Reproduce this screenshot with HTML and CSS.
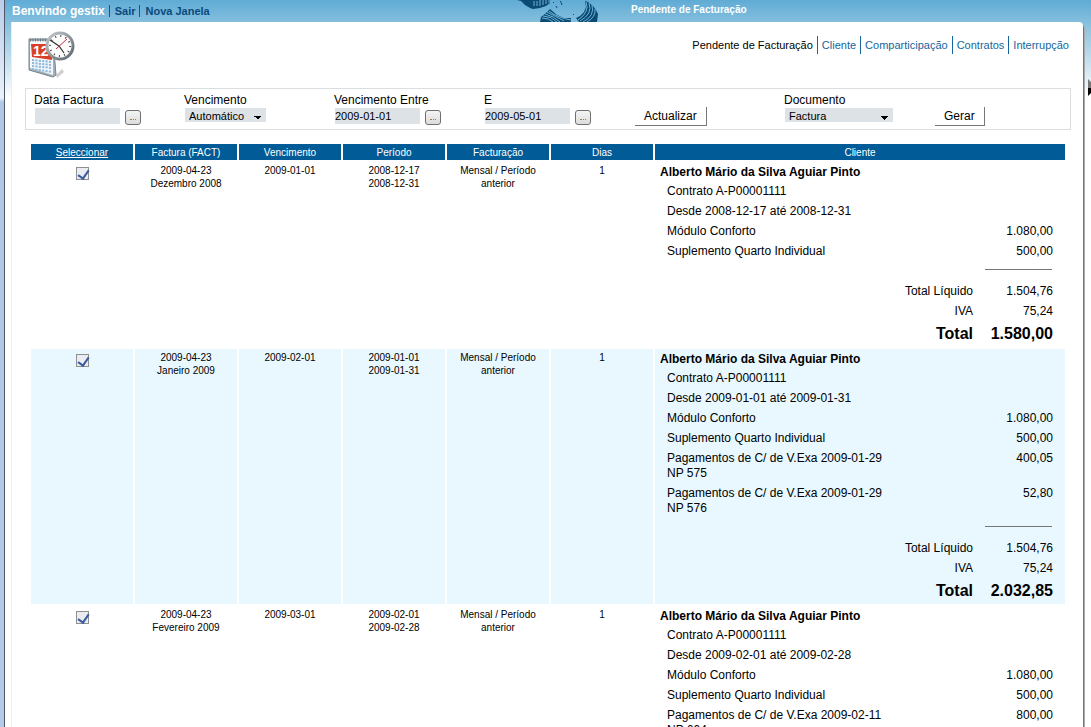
FILE: index.html
```html
<!DOCTYPE html>
<html lang="pt">
<head>
<meta charset="utf-8">
<title>Pendente de Facturação</title>
<link rel="stylesheet" href="styles.css">
</head>
<body>
<div class="shell">
  <div class="frame"></div>
  <div class="page">
    <header class="topbar">
      <nav class="session">
        <strong class="welcome">Benvindo gestix</strong>
        <a href="#">Sair</a>
        <a href="#">Nova Janela</a>
      </nav>
      <svg class="brand" viewBox="0 0 84 22" aria-hidden="true">
        <g fill="none" stroke="#0b4a73">
          <path d="M1 0L5 1L9 5L14 8L17 9L24 8L30 6L34 3L34 0L18 0Z" fill="#0b4a73" stroke="none"/>
          <path d="M18 1V6M21 1V6M24 0V6M27 0V5M30 0V4M33 0V3M9 7L13 8" stroke="#6cb3d8" stroke-width="1"/>
          <path d="M24 22L25 17L30 13L34 9L41 15L48 18L55 18L55 22Z" fill="#0b4a73" stroke="none"/>
          <path d="M81 22L82 14L80 10L77 6L72 2L69 1L70 7L68 12L64 16L60 18L63 22Z" fill="#0b4a73" stroke="none"/>
          <g stroke="#6cb3d8" stroke-width="1">
            <path d="M26 18Q33 18 37 22M27 16Q35 16 41 22M29 14Q38 16 44 22M31 12Q39 16 48 21M33 11Q42 18 55 20"/>
            <path d="M70 2Q74 12 62 20M73 3Q77 14 64 21M76 5Q79 16 67 22M79 9Q80 17 71 22"/>
          </g>
          <path d="M37 2L38 3M44 1L45 2L46 5M40 6L41 8M57 14L58 15" stroke-width="1"/>
        </g>
      </svg>
      <strong class="title">Pendente de Facturação</strong>
    </header>
    <main class="panel">
      <div class="head">
        <svg class="icon" viewBox="0 0 48 50" role="img" aria-label="Calendário">
          <defs>
            <linearGradient id="rim" x1="0" y1="0" x2="1" y2="1"><stop offset="0" stop-color="#c3c8cb"/><stop offset="1" stop-color="#5d666d"/></linearGradient>
          </defs>
          <path d="M28 46L34 40L36 43L29 49Z" fill="#bbb" opacity=".7"/>
          <path d="M1 10L25 10L28 46L25 48L1 41Z" fill="#a5b1b8" stroke="#75838b"/>
          <path d="M2 12L25 12L25 46L2 39Z" fill="#f5f8fa"/>
          <path d="M3 15L25 15L24 31L4 28Z" fill="#d8402b"/>
          <path d="M2 11H25" stroke="#6e7b83" stroke-width="3" stroke-dasharray="1 1.5"/>
          <text x="5" y="27" class="day">12</text>
          <g stroke="#8db8dc" stroke-width="2" stroke-dasharray="2.2 1.2"><path d="M4 31L24 33M4 34L24 36M4 37L24 39M4 40L24 43"/></g>
          <circle cx="32" cy="17" r="13" fill="#fdfdfd" stroke="url(#rim)" stroke-width="3"/>
          <circle cx="32" cy="17" r="10" fill="none" stroke="#444" stroke-width="2" stroke-dasharray="1 4.24"/>
          <path d="M22 11L31 17L36 24" fill="none" stroke="#333" stroke-width="1.2"/>
          <path d="M28 20L39 10" stroke="#cf2b3a"/>
        </svg>
        <nav class="tabs">
          <a class="current" href="#">Pendente de Facturação</a>
          <a href="#">Cliente</a>
          <a href="#">Comparticipação</a>
          <a href="#">Contratos</a>
          <a href="#">Interrupção</a>
        </nav>
      </div>
      <form class="filters">
        <div class="field"><label for="df">Data Factura</label><div class="row"><input class="date" id="df" type="text"><button class="pick" type="button" aria-label="Escolher data"></button></div></div>
        <div class="field"><label for="ve">Vencimento</label><select id="ve" class="short"><option>Automático</option></select></div>
        <div class="field"><label for="d1">Vencimento Entre</label><div class="row"><input class="date" id="d1" type="text" value="2009-01-01"><button class="pick" type="button" aria-label="Escolher data"></button></div></div>
        <div class="field"><label for="d2">E</label><div class="row"><input class="date" id="d2" type="text" value="2009-05-01"><button class="pick" type="button" aria-label="Escolher data"></button></div></div>
        <div class="field action"><button class="submit" type="button">Actualizar</button></div>
        <div class="field"><label for="doc">Documento</label><select id="doc" class="long"><option>Factura</option></select></div>
        <div class="field action"><button class="submit" type="button">Gerar</button></div>
      </form>
      <table class="list">
        <colgroup><col class="narrow" span="6"><col></colgroup>
        <thead>
          <tr><th><a href="#">Seleccionar</a></th><th>Factura (FACT)</th><th>Vencimento</th><th>Período</th><th>Facturação</th><th>Dias</th><th>Cliente</th></tr>
        </thead>
        <tbody>
          <tr>
            <td><input class="tick" type="checkbox" checked aria-label="Seleccionar Dezembro 2008"></td>
            <td>2009-04-23<br>Dezembro 2008</td><td>2009-01-01</td><td>2008-12-17<br>2008-12-31</td><td>Mensal / Período anterior</td><td>1</td>
            <td class="client">
              <strong class="name">Alberto Mário da Silva Aguiar Pinto</strong>
              <div class="item"><span>Contrato A-P00001111</span></div>
              <div class="item"><span>Desde 2008-12-17 até 2008-12-31</span></div>
              <div class="item"><span>Módulo Conforto</span><span>1.080,00</span></div>
              <div class="item"><span>Suplemento Quarto Individual</span><span>500,00</span></div>
              <div class="rule"></div>
              <div class="sum"><span>Total Líquido</span><span>1.504,76</span></div>
              <div class="sum"><span>IVA</span><span>75,24</span></div>
              <div class="sum total"><span>Total</span><span>1.580,00</span></div>
            </td>
          </tr>
          <tr class="alt">
            <td><input class="tick" type="checkbox" checked aria-label="Seleccionar Janeiro 2009"></td>
            <td>2009-04-23<br>Janeiro 2009</td><td>2009-02-01</td><td>2009-01-01<br>2009-01-31</td><td>Mensal / Período anterior</td><td>1</td>
            <td class="client">
              <strong class="name">Alberto Mário da Silva Aguiar Pinto</strong>
              <div class="item"><span>Contrato A-P00001111</span></div>
              <div class="item"><span>Desde 2009-01-01 até 2009-01-31</span></div>
              <div class="item"><span>Módulo Conforto</span><span>1.080,00</span></div>
              <div class="item"><span>Suplemento Quarto Individual</span><span>500,00</span></div>
              <div class="item"><span>Pagamentos de C/ de V.Exa 2009-01-29<br>NP 575</span><span>400,05</span></div>
              <div class="item"><span>Pagamentos de C/ de V.Exa 2009-01-29<br>NP 576</span><span>52,80</span></div>
              <div class="rule"></div>
              <div class="sum"><span>Total Líquido</span><span>1.504,76</span></div>
              <div class="sum"><span>IVA</span><span>75,24</span></div>
              <div class="sum total"><span>Total</span><span>2.032,85</span></div>
            </td>
          </tr>
          <tr>
            <td><input class="tick" type="checkbox" checked aria-label="Seleccionar Fevereiro 2009"></td>
            <td>2009-04-23<br>Fevereiro 2009</td><td>2009-03-01</td><td>2009-02-01<br>2009-02-28</td><td>Mensal / Período anterior</td><td>1</td>
            <td class="client">
              <strong class="name">Alberto Mário da Silva Aguiar Pinto</strong>
              <div class="item"><span>Contrato A-P00001111</span></div>
              <div class="item"><span>Desde 2009-02-01 até 2009-02-28</span></div>
              <div class="item"><span>Módulo Conforto</span><span>1.080,00</span></div>
              <div class="item"><span>Suplemento Quarto Individual</span><span>500,00</span></div>
              <div class="item"><span>Pagamentos de C/ de V.Exa 2009-02-11<br>NP 604</span><span>800,00</span></div>
            </td>
          </tr>
        </tbody>
      </table>
    </main>
    <svg class="handle" viewBox="0 0 3 18" aria-hidden="true"><path d="M0 0L3 3V9H0Z" fill="#777"/><path d="M0 9H3V14L0 17Z" fill="#000"/></svg>
  </div>
</div>
</body>
</html>
```

FILE: styles.css
```css
* { box-sizing: border-box; }
body {
  margin: 0;
  font: 12px/15px "Liberation Sans", Arial, sans-serif;
  color: #000;
  background: #fff;
}
a { text-decoration: none; color: #14669c; }
.shell { display: flex; min-height: 100vh; }
.frame {
  flex: 0 0 5px;
  border-right: 1px solid #4d5765;
  background: linear-gradient(#b9cdea, #eaf1fa 98px, #b0c8e6 102px, #b3cbe9);
}
.page {
  position: relative;
  flex: 1;
  min-width: 0;
  display: flex;
  flex-direction: column;
  padding: 0 8px 0 6px;
  background: linear-gradient(#5fabd5, #84bfdd 22px, #fff 98px);
}

.topbar { display: flex; height: 22px; }
.session { display: flex; align-items: center; flex: 0 0 505px; font-size: 11px; font-weight: bold; }
.welcome { color: #fff; font-size: 12px; padding: 0 4px 0 1px; }
.session a { color: #0b4a7c; line-height: 12px; padding: 0 4px 0 5px; border-left: 1px solid #0b5a90; }
.brand { width: 84px; height: 22px; }
.title { color: #fff; font-size: 10px; line-height: 20px; padding-left: 31px; }

.panel {
  flex: 1;
  padding: 0 12px 0 13px;
  background: #fff;
  border-left: 1px solid #eee;
  border-top-right-radius: 4px;
  box-shadow: 1px 2px 0 #777, 2px 4px 0 #aaa;
}
.head { display: flex; justify-content: space-between; height: 66px; padding-top: 7px; }
.icon { width: 48px; height: 50px; margin-left: 3px; }
.day { font: bold 14px "Liberation Sans", Arial, sans-serif; fill: #fff; }
.tabs { display: flex; align-items: flex-start; font-size: 11px; padding-top: 7px; }
.tabs a { line-height: 18px; padding: 0 4px; }
.tabs a + a { border-left: 1px solid #14669c; }
.tabs a:last-child { padding-right: 2px; }
.tabs .current { color: #000; }

.filters {
  display: grid;
  grid-template-columns: repeat(6, 75fr) 68fr;
  height: 42px;
  padding: 4px 0 0 8px;
  border: 1px solid #dcdfe2;
}
.field { display: flex; flex-direction: column; align-items: flex-start; }
.field label { line-height: 15px; }
.row { display: flex; gap: 5px; }
.date, .short, .long {
  height: 16px;
  margin: 0 0 0 1px;
  border: 0;
  border-radius: 0;
  background-color: #dde2e6;
  font: 11px "Liberation Sans", Arial, sans-serif;
  color: #000;
}
.date { width: 85px; padding: 0; }
.short, .long {
  appearance: none;
  padding: 1px 0 0 4px;
  height: 14px;
  background-image: linear-gradient(to bottom left, #000 50%, transparent 50%), linear-gradient(to bottom right, #000 50%, transparent 50%);
  background-size: 4px 4px;
  background-position: right 8px top 8px, right 4px top 8px;
  background-repeat: no-repeat;
}
.short { width: 81px; }
.long { width: 108px; }
.pick {
  display: flex;
  align-items: flex-end;
  justify-content: center;
  width: 16px;
  height: 15px;
  margin-top: 2px;
  padding: 0 0 4px;
  border: 1px solid #707070;
  border-radius: 3px;
  background: linear-gradient(#f4f4f4, #ddd);
}
.pick::after { content: ""; width: 6px; border-top: 1px dotted #a67c3c; }
.action { padding-top: 14px; }
.submit {
  height: 19px;
  padding: 0 9px;
  margin-left: 1px;
  border: 0;
  border-right: 1px solid #777;
  border-bottom: 1px solid #777;
  background: #fff;
  font: 12px "Liberation Sans", Arial, sans-serif;
}

.list {
  width: calc(100% - 8px);
  margin: 12px 0 0 4px;
  table-layout: fixed;
  border-spacing: 2px;
  font-size: 10px;
  line-height: 13px;
}
.narrow { width: 102px; }
.list th { height: 16px; padding: 0; background: #005b97; color: #fff; font-weight: normal; }
.list th a { color: #fff; text-decoration: underline; }
.list td { padding: 2px 8px 0; text-align: center; vertical-align: top; }
.alt td { background: #e8f8fe; }
.tick {
  appearance: none;
  display: block;
  width: 13px;
  height: 13px;
  margin: 3px auto 0;
  border: 1px solid #8e8f8f;
  background: #e9ecf1;
  position: relative;
}
.tick:checked::after {
  content: "";
  position: absolute;
  left: 3px;
  top: 0;
  width: 5px;
  height: 9px;
  border: solid #3d5aa0;
  border-width: 0 2px 2px 0;
  transform: rotate(35deg);
}
.list .client { padding: 0 12px 0 5px; text-align: left; font-size: 12px; line-height: 15px; }
.name { display: block; line-height: 20px; }
.item { display: flex; justify-content: space-between; padding: 2px 0 3px 7px; }
.rule { width: 67px; height: 12px; margin: 7px 1px 0 auto; border-top: 1px solid #777; }
.sum { display: flex; justify-content: flex-end; line-height: 20px; text-align: right; }
.sum span + span { width: 80px; }
.total { font-size: 16px; font-weight: bold; line-height: 26px; }
.handle { position: absolute; right: 0; top: 79px; width: 3px; height: 18px; }
```
